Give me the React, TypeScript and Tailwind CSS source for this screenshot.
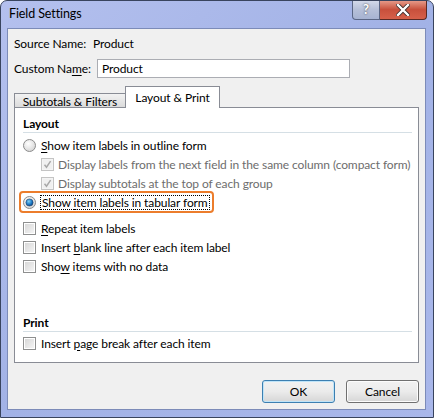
import React from 'react'

const font = { fontFamily: 'Lato, "Noto Sans", "Liberation Sans", sans-serif' }

function U({ children }: { children: React.ReactNode }) {
  return <span className="underline underline-offset-[2px]">{children}</span>
}

function Radio({ checked }: { checked?: boolean }) {
  return (
    <svg width="13" height="13" viewBox="0 0 13 13" className="shrink-0">
      <defs>
        <radialGradient id="rfill" cx="40%" cy="35%" r="70%">
          <stop offset="0%" stopColor="#ffffff" />
          <stop offset="100%" stopColor="#d4d4d4" />
        </radialGradient>
        <radialGradient id="rdot" cx="40%" cy="35%" r="70%">
          <stop offset="0%" stopColor="#7fd0f5" />
          <stop offset="60%" stopColor="#1c78c4" />
          <stop offset="100%" stopColor="#0c3f7a" />
        </radialGradient>
      </defs>
      <circle cx="6.5" cy="6.5" r="6" fill="url(#rfill)" stroke="#8c8c8c" strokeWidth="1" />
      {checked && <circle cx="6.5" cy="6.5" r="3.6" fill="url(#rdot)" stroke="#20436f" strokeWidth="0.6" />}
    </svg>
  )
}

function Check({ checked, disabled }: { checked?: boolean; disabled?: boolean }) {
  return (
    <span
      className={`relative inline-flex h-[13px] w-[13px] shrink-0 items-center justify-center border ${
        disabled ? 'border-[#c4c4c4] bg-[#f4f4f4]' : 'border-[#8e8f8f] bg-white'
      }`}
    >
      <span
        className={`absolute inset-[1px] ${
          disabled ? 'bg-[#f0f0f0]' : 'bg-gradient-to-br from-[#d8d8d8] to-[#f4f4f4]'
        }`}
      />
      {checked && (
        <svg width="11" height="11" viewBox="0 0 11 11" className="relative">
          <path d="M2.5 5.8 L4.5 8.2 L8.6 2.2" fill="none" stroke={disabled ? '#a8a8a8' : '#333'} strokeWidth="1.5" />
        </svg>
      )}
    </span>
  )
}

export default function App() {
  return (
    <div
      style={font}
      className="relative flex h-[418px] w-[434px] flex-col overflow-hidden whitespace-nowrap rounded-t-[7px] border border-[#39445e] bg-gradient-to-br from-[#b4c0ee] via-[#a2b2e6] to-[#a9b7ea] pb-[7px] pl-[6px] pr-[7px] text-[12px] tracking-[-0.1px] text-black"
    >
      {/* Title bar */}
      <div className="flex h-[27px] shrink-0 items-start justify-between">
        <div className="pl-[2px] pt-[5px] text-[12.5px] leading-[16px] text-black">Field Settings</div>
        <div className="-mt-[1px] mr-[-1px] flex">
          <div className="flex h-[20px] w-[28px] items-center justify-center rounded-bl-[4px] border border-t-0 border-[#5a6684] bg-gradient-to-b from-[#d6dcec] via-[#b6c0d8] to-[#a7b3d2] text-[13px] font-bold leading-none text-white [text-shadow:0_0_2px_#333]">
            ?
          </div>
          <div className="flex h-[20px] w-[47px] items-center justify-center rounded-br-[4px] border border-l-0 border-t-0 border-[#5a2a24] bg-gradient-to-b from-[#e8a090] via-[#c8503c] to-[#d6604a]">
            <svg width="14" height="12" viewBox="0 0 14 12">
              <path d="M2 1 L12 11 M12 1 L2 11" stroke="#3a2a2a" strokeWidth="4" strokeLinecap="square" />
              <path d="M2 1 L12 11 M12 1 L2 11" stroke="#ffffff" strokeWidth="2.4" strokeLinecap="square" />
            </svg>
          </div>
        </div>
      </div>

      {/* Client area */}
      <div className="flex flex-1 flex-col border border-[#7c8bb8] bg-[#f0f0f0] px-[6px]">
        <div className="mt-[6px] flex h-[18px] items-center">
          <span className="w-[79px]">Source Name:</span>
          <span>Product</span>
        </div>
        <div className="mt-[6px] flex h-[19px] items-center">
          <span className="w-[83px]">
            Custom Na<U>m</U>e:
          </span>
          <div className="flex h-[19px] w-[253px] items-center border border-[#abadb3] bg-white pl-[4px]">Product</div>
        </div>

        {/* Tabs */}
        <div className="mt-[8px] flex h-[21px] items-end">
          <div className="flex h-[14px] w-[112px] items-center justify-center border border-b-0 border-[#898c95] bg-gradient-to-b from-[#f2f2f2] to-[#dbdbdb] pt-[2px] leading-none">
            Subtotals &amp; Filters
          </div>
          <div className="relative z-10 -ml-[1px] mb-[-1px] flex h-[22px] w-[95px] items-start justify-center border border-b-0 border-[#898c95] bg-white pt-[3px] leading-[16px]">
            Layout &amp; Print
          </div>
        </div>

        {/* Panel */}
        <div className="flex h-[256px] flex-col border border-[#898c95] bg-white pl-[8px] pr-[6px] pt-[6px]">
          <div className="h-[19px] border-b border-[#d5dfe5] font-bold leading-[19px]">Layout</div>
          <div className="mt-[3px] flex h-[19px] items-center">
            <Radio />
            <span className="ml-[5px]">
              <U>S</U>how item labels in outline form
            </span>
          </div>
          <div className="flex h-[19px] items-center pl-[18px] text-[#6d6d6d]">
            <Check checked disabled />
            <span className="ml-[4px]">Display labels from the next field in the same column (compact form)</span>
          </div>
          <div className="flex h-[19px] items-center pl-[18px] text-[#6d6d6d]">
            <Check checked disabled />
            <span className="ml-[4px]">Display subtotals at the top of each group</span>
          </div>
          <div className="relative flex h-[19px] items-center">
            <Radio checked />
            <span className="ml-[4px] border border-dotted border-black px-[1px] leading-[13px]">
              Show <U>i</U>tem labels in tabular form
            </span>
            <div className="pointer-events-none absolute left-[-4px] top-[-2px] h-[22px] w-[195px] rounded-[4px] border-2 border-[#ec7d2c]" />
          </div>
          <div className="mt-[7px] flex h-[19px] items-center">
            <Check />
            <span className="ml-[5px]">
              <U>R</U>epeat item labels
            </span>
          </div>
          <div className="flex h-[19px] items-center">
            <Check />
            <span className="ml-[5px]">
              Insert <U>b</U>lank line after each item label
            </span>
          </div>
          <div className="flex h-[19px] items-center">
            <Check />
            <span className="ml-[5px]">
              Sho<U>w</U> items with no data
            </span>
          </div>

          <div className="mt-[37px] h-[19px] border-b border-[#d5dfe5] font-bold leading-[19px]">Print</div>
          <div className="mt-[2px] flex h-[19px] items-center">
            <Check />
            <span className="ml-[5px]">
              Insert <U>p</U>age break after each item
            </span>
          </div>
        </div>

        {/* Buttons */}
        <div className="mt-[17px] flex justify-end gap-[11px]">
          <button className="h-[23px] w-[73px] rounded-[3px] border border-[#3c7fb1] bg-gradient-to-b from-[#f2f2f2] via-[#ebebeb] to-[#d6d6d6] leading-none shadow-[inset_0_0_0_1px_#bfe4f8]">
            OK
          </button>
          <button className="h-[23px] w-[73px] rounded-[3px] border border-[#707070] bg-gradient-to-b from-[#f2f2f2] via-[#ebebeb] to-[#d6d6d6] leading-none shadow-[inset_0_0_0_1px_#fcfcfc]">
            Cancel
          </button>
        </div>
      </div>
    </div>
  )
}
